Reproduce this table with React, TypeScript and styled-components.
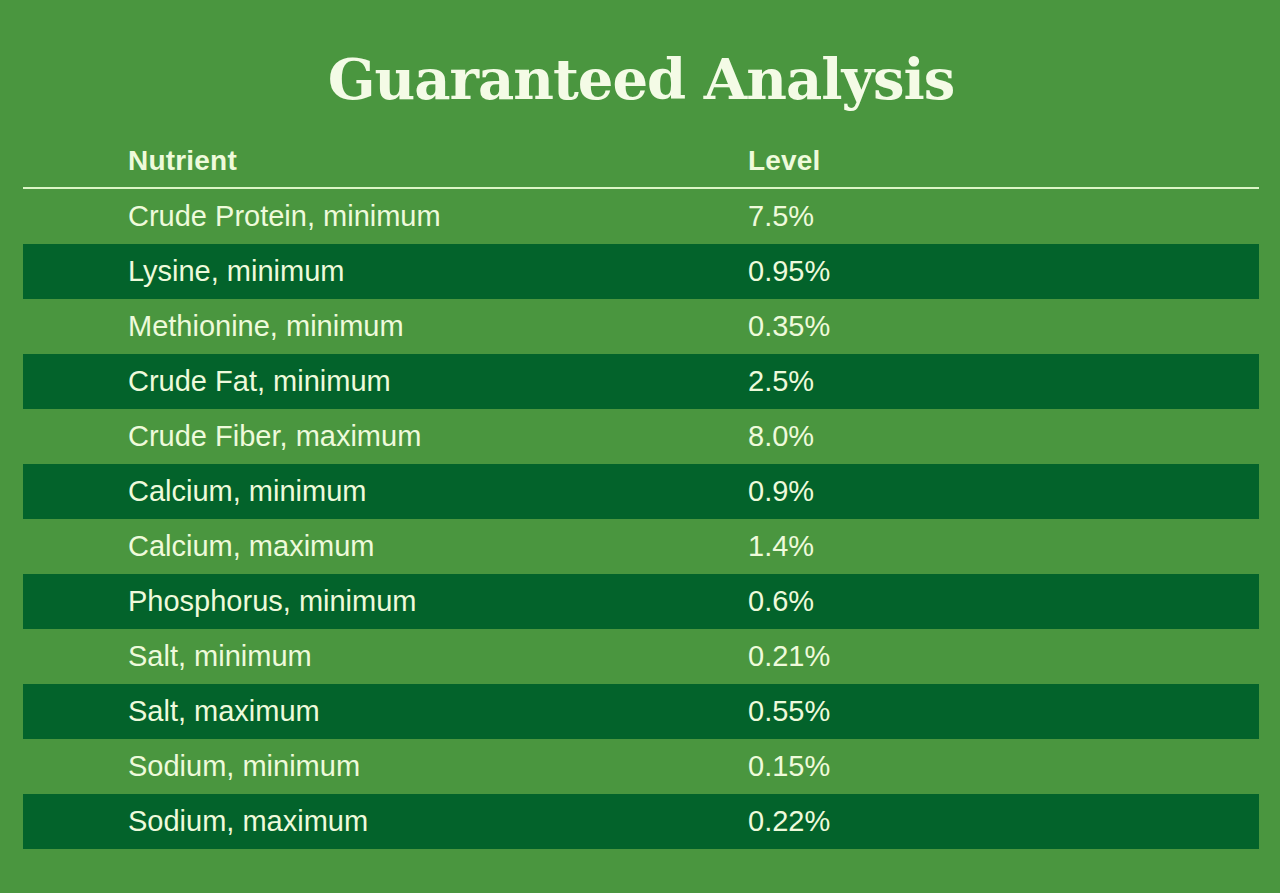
import React from "react";
import styled, { createGlobalStyle } from "styled-components";

const Global = createGlobalStyle`
  html, body { margin: 0; padding: 0; background: #4a963f; }
  body { font-family: "Liberation Sans", Arial, sans-serif; }
`;

const Page = styled.div`
  width: 1280px;
  height: 893px;
  background: #4a963f;
  box-sizing: border-box;
  padding: 44px 21px 0 23px;
`;

const Title = styled.h1`
  margin: 0;
  text-align: center;
  font-family: "DejaVu Serif", serif;
  font-weight: 700;
  font-size: 56px;
  line-height: 70px;
  color: #f4fbe6;
  letter-spacing: -1px;
`;

const Table = styled.div`
  margin-top: 19px;
  display: flex;
  flex-direction: column;
`;

const Row = styled.div<{ $dark?: boolean; $head?: boolean }>`
  display: grid;
  grid-template-columns: 620px 1fr;
  padding-left: 105px;
  align-items: center;
  height: ${(p) => (p.$head ? "56px" : "55px")};
  background: ${(p) => (p.$dark ? "#03632b" : "transparent")};
  border-bottom: ${(p) => (p.$head ? "2px solid #dcf5c6" : "none")};
  box-sizing: border-box;
`;

const Cell = styled.div<{ $head?: boolean }>`
  color: #eefadb;
  font-family: "Liberation Sans", Arial, sans-serif;
  font-weight: ${(p) => (p.$head ? 700 : 400)};
  font-size: ${(p) => (p.$head ? "28px" : "29px")};
  letter-spacing: ${(p) => (p.$head ? "0.2px" : "0")};
  padding-top: ${(p) => (p.$head ? "2px" : "0")};
`;

const rows: [string, string][] = [
  ["Crude Protein, minimum", "7.5%"],
  ["Lysine, minimum", "0.95%"],
  ["Methionine, minimum", "0.35%"],
  ["Crude Fat, minimum", "2.5%"],
  ["Crude Fiber, maximum", "8.0%"],
  ["Calcium, minimum", "0.9%"],
  ["Calcium, maximum", "1.4%"],
  ["Phosphorus, minimum", "0.6%"],
  ["Salt, minimum", "0.21%"],
  ["Salt, maximum", "0.55%"],
  ["Sodium, minimum", "0.15%"],
  ["Sodium, maximum", "0.22%"],
];

export default function App() {
  return (
    <Page>
      <Global />
      <Title>Guaranteed Analysis</Title>
      <Table>
        <Row $head>
          <Cell $head>Nutrient</Cell>
          <Cell $head>Level</Cell>
        </Row>
        {rows.map(([n, v], i) => (
          <Row key={n} $dark={i % 2 === 1}>
            <Cell>{n}</Cell>
            <Cell>{v}</Cell>
          </Row>
        ))}
      </Table>
    </Page>
  );
}
